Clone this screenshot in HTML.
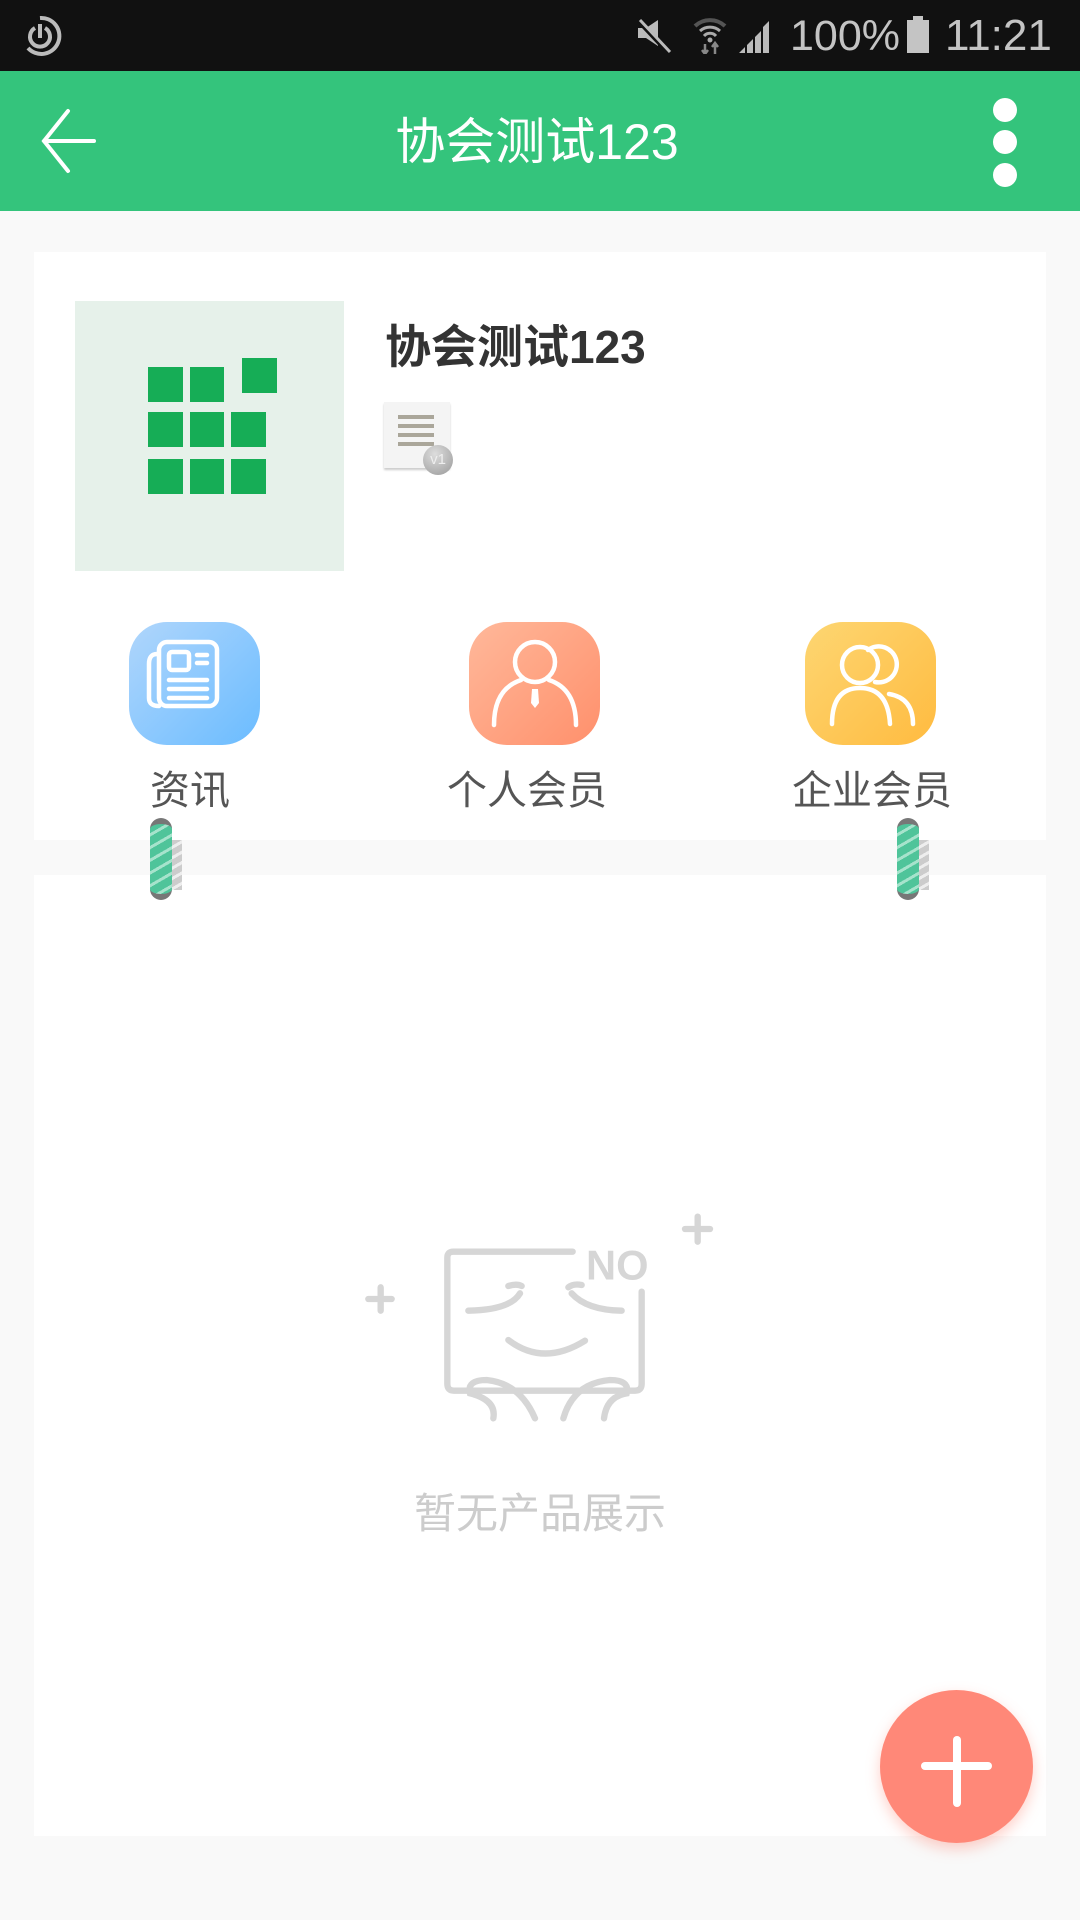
<!DOCTYPE html>
<html><head><meta charset="utf-8"><style>
*{margin:0;padding:0;box-sizing:border-box}
body{width:1080px;height:1920px;background:#f9f9f9;position:relative;overflow:hidden;font-family:"Liberation Sans","Noto Sans CJK SC",sans-serif}
.abs{position:absolute}
.lbl{position:absolute;top:764px;font-size:40px;color:#555;text-align:center;width:300px;line-height:54px}
.bar{position:absolute;top:818px;width:22px;height:82px;border-radius:11px;background:repeating-linear-gradient(150deg,#4fc49a 0 8px,#a6e3cc 8px 11px);border-top:6px solid #777;border-bottom:6px solid #777}
.bar2{position:absolute;top:840px;width:12px;height:50px;background:repeating-linear-gradient(150deg,#ccc 0 6px,#eee 6px 9px)}
</style></head><body>
<div class="abs" style="left:0;top:0;width:1080px;height:71px;background:#111"></div>
<svg class="abs" style="left:18px;top:14px" width="44" height="44" viewBox="0 0 44 44"><path d="M22 4 A18 18 0 1 1 10 34" fill="none" stroke="#bbb" stroke-width="4"/><path d="M17 14 A10 10 0 1 0 27 14" fill="none" stroke="#bbb" stroke-width="4"/><path d="M22 10 V24" stroke="#bbb" stroke-width="4"/></svg>
<svg class="abs" style="left:636px;top:18px" width="40" height="36" viewBox="0 0 40 36"><path d="M2 10h8l12-8v26l-12-8H2z" fill="#bbb"/><path d="M2 2 L32 34" stroke="#111" stroke-width="5"/><path d="M4 2 L34 34" stroke="#bbb" stroke-width="3"/></svg>
<svg class="abs" style="left:693px;top:16px" width="34" height="38" viewBox="0 0 34 38"><path d="M2 10 A22 22 0 0 1 32 10" fill="none" stroke="#555" stroke-width="4"/><path d="M7 15 A15 15 0 0 1 27 15" fill="none" stroke="#aaa" stroke-width="3"/><path d="M11 20 A8 8 0 0 1 23 20" fill="none" stroke="#aaa" stroke-width="3"/><circle cx="17" cy="24" r="2.5" fill="#aaa"/><path d="M12 28v10M9 34l3 4 3-4M22 38V28M19 31l3-4 3 4" stroke="#888" stroke-width="2.5" fill="none"/></svg>
<svg class="abs" style="left:737px;top:17px" width="38" height="36" viewBox="0 0 38 36"><path d="M2 36h6v-6zM10 36h6V22l-6 6zM18 36h6V14l-6 6zM26 36h6V4l-6 6z" fill="#bbb"/></svg>
<div class="abs" style="left:790px;top:10px;font-size:43px;color:#c4c4c4;line-height:52px">100%</div>
<div class="abs" style="left:907px;top:20px;width:22px;height:33px;background:#c4c4c4"></div>
<div class="abs" style="left:913px;top:16px;width:10px;height:5px;background:#c4c4c4"></div>
<div class="abs" style="left:945px;top:10px;font-size:44px;color:#c4c4c4;line-height:52px">11:21</div>

<div class="abs" style="left:0;top:71px;width:1080px;height:140px;background:#34c47c"></div>
<svg class="abs" style="left:40px;top:108px" width="56" height="66" viewBox="0 0 56 66"><path d="M28 3 L4 33 L28 63 M4 33 H54" fill="none" stroke="#fff" stroke-width="4" stroke-linecap="round"/></svg>
<div class="abs" style="left:0;top:110px;width:1074px;text-align:center;font-size:50px;color:#fff;line-height:64px">协会测试123</div>
<div class="abs" style="left:993px;top:98px;width:24px;height:24px;border-radius:50%;background:#fff"></div>
<div class="abs" style="left:993px;top:130px;width:24px;height:24px;border-radius:50%;background:#fff"></div>
<div class="abs" style="left:993px;top:163px;width:24px;height:24px;border-radius:50%;background:#fff"></div>

<div class="abs" style="left:34px;top:252px;width:1012px;height:588px;background:#fff"></div>
<div class="abs" style="left:75px;top:301px;width:269px;height:270px;background:#e6f1ea"></div>
<svg class="abs" style="left:75px;top:301px" width="269" height="270">
<g fill="#16ad56"><rect x="73" y="66" width="35" height="35"/><rect x="115" y="66" width="34" height="35"/><rect x="167" y="57" width="35" height="35"/>
<rect x="73" y="111" width="35" height="35"/><rect x="115" y="111" width="34" height="35"/><rect x="156" y="111" width="35" height="35"/>
<rect x="73" y="158" width="35" height="35"/><rect x="115" y="158" width="34" height="35"/><rect x="156" y="158" width="35" height="35"/></g></svg>
<div class="abs" style="left:385px;top:316px;font-size:46px;font-weight:bold;color:#333;line-height:62px">协会测试123</div>
<div class="abs" style="left:384px;top:402px;width:66px;height:66px;background:#f4f4f4;box-shadow:0 2px 2px #ccc"></div>
<div class="abs" style="left:398px;top:415px;width:36px;height:4px;background:#aaa69a;box-shadow:0 9px 0 #aaa69a,0 18px 0 #aaa69a,0 27px 0 #aaa69a"></div>
<div class="abs" style="left:423px;top:445px;width:30px;height:30px;border-radius:50%;background:radial-gradient(circle at 40% 30%,#ddd,#999);color:#eee;font-size:15px;text-align:center;line-height:30px">v1</div>

<div class="abs" style="left:129px;top:622px;width:131px;height:123px;border-radius:38px;background:linear-gradient(135deg,#b0d6fc,#6bbcff)"></div>
<svg class="abs" style="left:129px;top:622px" width="131" height="123" viewBox="0 0 131 123"><g fill="none" stroke="#fff" stroke-width="4.5" stroke-linecap="round"><path d="M28 32 Q20 32 20 42 V76 Q20 84 30 84"/><rect x="30" y="20" width="58" height="64" rx="8"/><rect x="40" y="30" width="20" height="18" rx="3"/><path d="M68 33h10M68 41h10M40 58h38M40 67h38M40 76h38"/></g></svg>
<div class="abs" style="left:469px;top:622px;width:131px;height:123px;border-radius:38px;background:linear-gradient(135deg,#ffb89a,#ff906c)"></div>
<svg class="abs" style="left:469px;top:622px" width="131" height="123" viewBox="0 0 131 123"><g fill="none" stroke="#fff" stroke-width="4.5" stroke-linecap="round"><circle cx="66" cy="40" r="20"/><path d="M25 103 Q25 67 52 58 M80 58 Q107 67 107 103"/></g><path d="M63 67h6l1 14-4 5-4-5z" fill="#fff"/></svg>
<div class="abs" style="left:805px;top:622px;width:131px;height:123px;border-radius:38px;background:linear-gradient(135deg,#fdd672,#ffbb40)"></div>
<svg class="abs" style="left:805px;top:622px" width="131" height="123" viewBox="0 0 131 123"><g fill="none" stroke="#fff" stroke-width="4.5" stroke-linecap="round"><circle cx="55" cy="43" r="18"/><path d="M63 28 A18 18 0 1 1 70 60"/><path d="M27 102 Q27 66 55 66 Q83 66 85 102"/><path d="M84 72 Q108 76 108 102"/></g></svg>
<div class="lbl" style="left:40px">资讯</div>
<div class="lbl" style="left:377px">个人会员</div>
<div class="lbl" style="left:722px">企业会员</div>

<div class="abs" style="left:34px;top:875px;width:1012px;height:961px;background:#fff"></div>
<div class="bar2" style="left:170px"></div><div class="bar" style="left:150px"></div>
<div class="bar2" style="left:917px"></div><div class="bar" style="left:897px"></div>

<svg class="abs" style="left:350px;top:1180px" width="400" height="260" viewBox="0 0 1200 780"><g fill="none" stroke="#d6d6d6" stroke-width="19" stroke-linecap="round">
<path d="M668 215 H310 Q292 215 292 233 V612 Q292 632 312 632 H855 Q875 632 875 612 V335"/>
<path d="M55 357h70M92 322v70M1005 147h75M1043 110v75"/>
<path d="M475 318 Q500 310 515 318 M510 340 Q480 390 355 392"/>
<path d="M695 315 Q670 310 655 322 M665 340 Q710 390 815 392"/>
<path d="M475 480 Q580 560 705 482"/>
<path d="M430 715 Q440 660 360 640 Q350 600 410 600 Q510 610 555 715"/>
<path d="M640 715 Q670 610 780 600 Q840 600 830 640 Q770 650 762 715"/></g>
<text x="708" y="298" font-family="Liberation Sans" font-weight="bold" font-size="125" fill="#d6d6d6">NO</text></svg>
<div class="abs" style="left:0;top:1486px;width:1080px;text-align:center;font-size:42px;color:#ccc;line-height:56px">暂无产品展示</div>

<div class="abs" style="left:880px;top:1690px;width:153px;height:153px;border-radius:50%;background:#ff8878;box-shadow:0 6px 14px rgba(255,120,100,.35)"></div>
<div class="abs" style="left:921px;top:1762px;width:71px;height:8px;border-radius:4px;background:#fff"></div>
<div class="abs" style="left:953px;top:1736px;width:8px;height:71px;border-radius:4px;background:#fff"></div>
</body></html>
